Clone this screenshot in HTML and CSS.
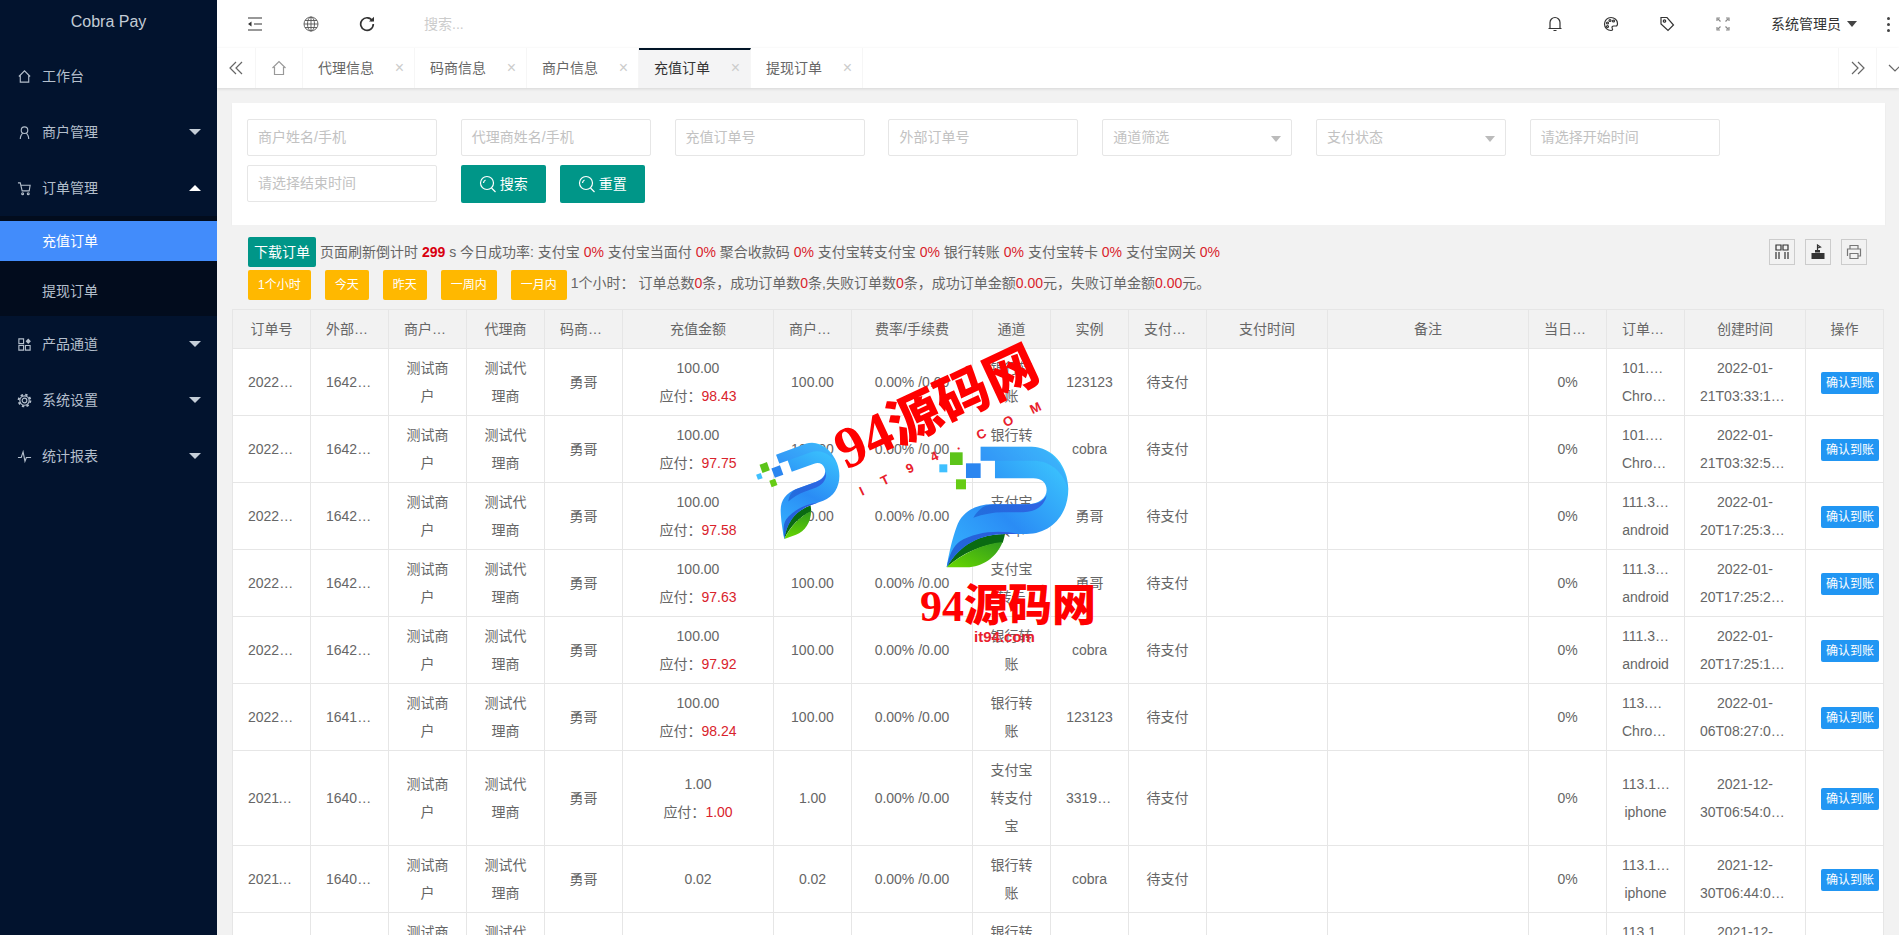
FILE: index.html
```html
<!DOCTYPE html>
<html lang="zh-CN">
<head>
<meta charset="utf-8">
<title>Cobra Pay</title>
<link rel="stylesheet" href="styles.css">
</head>
<body>
<div class="app">
  <aside class="side">
    <div class="brand">Cobra Pay</div>
    <nav>
      <a class="m"><svg class="ic si" viewBox="0 0 16 16"><path d="M2 8 8 2l6 6M3.500 7v7h9V7"/></svg>工作台</a>
      <a class="m"><svg class="ic si" viewBox="0 0 16 16"><circle cx="8" cy="5.500" r="3.500"/><path d="M3.500 15c0-3 1.500-6 3-6M12.500 15c0-3-1.500-6-3-6"/></svg>商户管理<i class="car"></i></a>
      <a class="m lit"><svg class="ic si" viewBox="0 0 16 16"><path d="M1 2h2.500l2 8.500h7.500l1-6H4"/><circle cx="6" cy="13.500" r="1"/><circle cx="12" cy="13.500" r="1"/></svg>订单管理<i class="car up"></i></a>
      <div class="sub">
        <a class="si-a on">充值订单</a>
        <a class="si-a">提现订单</a>
      </div>
      <a class="m"><svg class="ic si" viewBox="0 0 16 16"><path d="M2 2h5v5H2zM2 9h5v5H2zM9 9h5v5H9z"/><path class="fill" d="m12 1.500 2.800 3-2.800 3-2.800-3z"/></svg>产品通道<i class="car"></i></a>
      <a class="m"><svg class="ic si" viewBox="0 0 16 16"><circle cx="8" cy="8" r="2.500"/><circle cx="8" cy="8" r="5"/><circle class="teeth" cx="8" cy="8" r="6.300"/></svg>系统设置<i class="car"></i></a>
      <a class="m"><svg class="ic si" viewBox="0 0 16 16"><path d="M1 9h3.500l2-6 2 10 1.500-4h5"/></svg>统计报表<i class="car"></i></a>
    </nav>
  </aside>

  <div class="main">
    <header class="top">
      <div class="top-l">
        <svg class="ic ti" viewBox="0 0 16 16"><path d="M1 2h14M7 8h8M1 14h14"/><path class="fill" d="M1 8l3.500-2.500v5z"/></svg>
        <svg class="ic ti globe" viewBox="0 0 16 16"><circle cx="8" cy="8" r="7"/><ellipse cx="8" cy="8" rx="3.500" ry="7"/><path d="M1 8h14M2 4.500h12M2 11.500h12M8 1v14"/></svg>
        <svg class="ic ti re" viewBox="0 0 16 16"><path d="M13.500 5A6.300 6.300 0 1 0 14.300 8"/><path class="fill" d="M10 5.500h5V.8z"/></svg>
        <span class="find">搜索...</span>
      </div>
      <div class="top-r">
        <svg class="ic ti" viewBox="0 0 16 16"><path d="M3 12.500V6.500a5 5 0 0 1 10 0v6M1.500 12.500h13M6.500 14.500h3"/></svg>
        <svg class="ic ti" viewBox="0 0 16 16"><path d="M8 1.500a6.500 6.500 0 0 0 0 13c1.800 0 1.800-1.200 1.200-2.200-.6-1.200.2-2.300 1.500-2.300h2.300c1 0 1.500-.8 1.500-2.500C14.500 4 11.500 1.500 8 1.500z"/><circle cx="4.500" cy="7" r="1"/><circle cx="7" cy="4.500" r="1"/><circle cx="10.500" cy="5" r="1"/><circle cx="4.500" cy="10.500" r="1"/></svg>
        <svg class="ic ti" viewBox="0 0 16 16"><path d="M2 1.500h6l6.500 7.500-5.500 5.500L2 8z"/><circle cx="5.500" cy="5" r="1.200"/></svg>
        <svg class="ic ti dim" viewBox="0 0 16 16"><path d="M2 5V2h3M11 2h3v3M14 11v3h-3M5 14H2v-3M3 3l2.500 2.500M13 3l-2.500 2.500M13 13l-2.500-2.500M3 13l2.500-2.500"/></svg>
        <span class="user">系统管理员<i class="tri"></i></span>
        <span class="dots"><i></i><i></i><i></i></span>
      </div>
    </header>

    <div class="tabs">
      <span class="ctl"><svg class="ic chev" viewBox="0 0 16 16"><path d="M8 2 2 8l6 6M14 2 8 8l6 6"/></svg></span>
      <span class="home"><svg class="ic hm" viewBox="0 0 16 16"><path d="M1.500 8 8 1.500 14.500 8M3.500 7v7.500h9V7"/></svg></span>
      <span class="tab">代理信息<b>×</b></span>
      <span class="tab">码商信息<b>×</b></span>
      <span class="tab">商户信息<b>×</b></span>
      <span class="tab act">充值订单<b>×</b></span>
      <span class="tab">提现订单<b>×</b></span>
      <span class="grow"></span>
      <span class="ctl"><svg class="ic chev" viewBox="0 0 16 16"><path d="M2 2l6 6-6 6M8 2l6 6-6 6"/></svg></span>
      <span class="more"><svg class="ic chev" viewBox="0 0 16 16"><path d="M2 5l6 6 6-6"/></svg></span>
    </div>

    <div class="page">
      <form class="card">
        <span class="inp">商户姓名/手机</span>
        <span class="inp">代理商姓名/手机</span>
        <span class="inp">充值订单号</span>
        <span class="inp">外部订单号</span>
        <span class="inp sel">通道筛选<i class="tri lt"></i></span>
        <span class="inp sel">支付状态<i class="tri lt"></i></span>
        <span class="inp">请选择开始时间</span>
        <span class="inp">请选择结束时间</span>
        <div class="acts">
          <span class="btn"><svg class="ic mag" viewBox="0 0 18 18"><circle cx="8" cy="8" r="6.500"/><path d="m12.500 13 4 4M4.500 8a3.500 3.500 0 0 1 2-3"/></svg>搜索</span>
          <span class="btn"><svg class="ic mag" viewBox="0 0 18 18"><circle cx="8" cy="8" r="6.500"/><path d="m12.500 13 4 4M4.500 8a3.500 3.500 0 0 1 2-3"/></svg>重置</span>
        </div>
      </form>

      <div class="bar">
        <div class="bar-l">
          <div class="line one"><span class="dl">下载订单</span><span class="info">页面刷新倒计时 <strong>299</strong> s 今日成功率: 支付宝 <em>0%</em> 支付宝当面付 <em>0%</em> 聚合收款码 <em>0%</em> 支付宝转支付宝 <em>0%</em> 银行转账 <em>0%</em> 支付宝转卡 <em>0%</em> 支付宝网关 <em>0%</em></span></div>
          <div class="line"><span class="yl">1个小时</span><span class="yl">今天</span><span class="yl">昨天</span><span class="yl">一周内</span><span class="yl">一月内</span><span class="sum">1个小时： 订单总数<em>0</em>条，成功订单数<em>0</em>条,失败订单数<em>0</em>条，成功订单金额<em>0.00</em>元，失败订单金额<em>0.00</em>元。</span></div>
        </div>
        <div class="tools">
          <span class="tool"><svg class="ic tk" viewBox="0 0 16 16"><path d="M2 1h5v5H2zM9 1h5v5H9zM2 8v7M5 8v7M11 8v7M14 8v7"/></svg></span>
          <span class="tool"><svg class="ic tk" viewBox="0 0 16 16"><path class="fill" d="M1.500 9h13v6h-13zM5 6h5v2.500H5z"/><path d="M7.500 6V1l3 2-3 1"/></svg></span>
          <span class="tool"><svg class="ic tk gr" viewBox="0 0 16 16"><path d="M4 5V1.500h8V5M1.500 12V5h13v7H12M4 9.500h8v5H4z"/></svg></span>
        </div>
      </div>

      <table class="grid">
        <colgroup>
          <col class="w78"><col class="w78"><col class="w78"><col class="w78"><col class="w78"><col class="w151"><col class="w78"><col class="w121"><col class="w78"><col class="w78"><col class="w78"><col class="w121"><col class="w202"><col class="w78"><col class="w78"><col class="w121"><col class="w78">
        </colgroup>
        <thead>
          <tr><th><div>订单号</div></th><th><div>外部订单号</div></th><th><div>商户名称</div></th><th><div>代理商</div></th><th><div>码商名称</div></th><th><div>充值金额</div></th><th><div>商户实收</div></th><th><div>费率/手续费</div></th><th><div>通道</div></th><th><div>实例</div></th><th><div>支付状态</div></th><th><div>支付时间</div></th><th><div>备注</div></th><th><div>当日成功率</div></th><th><div>订单信息</div></th><th><div>创建时间</div></th><th><div>操作</div></th></tr>
        </thead>
        <tbody>
          <tr><td><div class="one-l">2022012103331</div></td><td><div class="one-l">1642735996</div></td><td><div>测试商户</div></td><td><div>测试代理商</div></td><td><div>勇哥</div></td><td><div>100.00<br>应付：<em>98.43</em></div></td><td><div>100.00</div></td><td><div>0.00% /0.00</div></td><td><div>银行转账</div></td><td><div>123123</div></td><td><div>待支付</div></td><td></td><td></td><td><div>0%</div></td><td><div class="one-l">101.32.128.10</div><div class="one-l">Chrome</div></td><td><div>2022-01-21T03:33:16.000Z</div></td><td><div class="op"><span class="ok">确认到账</span></div></td></tr>
          <tr><td><div class="one-l">2022012103325</div></td><td><div class="one-l">1642735970</div></td><td><div>测试商户</div></td><td><div>测试代理商</div></td><td><div>勇哥</div></td><td><div>100.00<br>应付：<em>97.75</em></div></td><td><div>100.00</div></td><td><div>0.00% /0.00</div></td><td><div>银行转账</div></td><td><div>cobra</div></td><td><div>待支付</div></td><td></td><td></td><td><div>0%</div></td><td><div class="one-l">101.32.128.10</div><div class="one-l">Chrome</div></td><td><div>2022-01-21T03:32:55.000Z</div></td><td><div class="op"><span class="ok">确认到账</span></div></td></tr>
          <tr><td><div class="one-l">2022012017253</div></td><td><div class="one-l">1642699530</div></td><td><div>测试商户</div></td><td><div>测试代理商</div></td><td><div>勇哥</div></td><td><div>100.00<br>应付：<em>97.58</em></div></td><td><div>100.00</div></td><td><div>0.00% /0.00</div></td><td><div>支付宝转卡</div></td><td><div>勇哥</div></td><td><div>待支付</div></td><td></td><td></td><td><div>0%</div></td><td><div class="one-l">111.39.24.60</div><div class="one-l">android</div></td><td><div>2022-01-20T17:25:36.000Z</div></td><td><div class="op"><span class="ok">确认到账</span></div></td></tr>
          <tr><td><div class="one-l">2022012017252</div></td><td><div class="one-l">1642699520</div></td><td><div>测试商户</div></td><td><div>测试代理商</div></td><td><div>勇哥</div></td><td><div>100.00<br>应付：<em>97.63</em></div></td><td><div>100.00</div></td><td><div>0.00% /0.00</div></td><td><div>支付宝转卡</div></td><td><div>勇哥</div></td><td><div>待支付</div></td><td></td><td></td><td><div>0%</div></td><td><div class="one-l">111.39.24.60</div><div class="one-l">android</div></td><td><div>2022-01-20T17:25:24.000Z</div></td><td><div class="op"><span class="ok">确认到账</span></div></td></tr>
          <tr><td><div class="one-l">2022012017251</div></td><td><div class="one-l">1642699510</div></td><td><div>测试商户</div></td><td><div>测试代理商</div></td><td><div>勇哥</div></td><td><div>100.00<br>应付：<em>97.92</em></div></td><td><div>100.00</div></td><td><div>0.00% /0.00</div></td><td><div>银行转账</div></td><td><div>cobra</div></td><td><div>待支付</div></td><td></td><td></td><td><div>0%</div></td><td><div class="one-l">111.39.24.60</div><div class="one-l">android</div></td><td><div>2022-01-20T17:25:12.000Z</div></td><td><div class="op"><span class="ok">确认到账</span></div></td></tr>
          <tr><td><div class="one-l">2022010608270</div></td><td><div class="one-l">1641457620</div></td><td><div>测试商户</div></td><td><div>测试代理商</div></td><td><div>勇哥</div></td><td><div>100.00<br>应付：<em>98.24</em></div></td><td><div>100.00</div></td><td><div>0.00% /0.00</div></td><td><div>银行转账</div></td><td><div>123123</div></td><td><div>待支付</div></td><td></td><td></td><td><div>0%</div></td><td><div class="one-l">113.13.20.45</div><div class="one-l">Chrome</div></td><td><div>2022-01-06T08:27:05.000Z</div></td><td><div class="op"><span class="ok">确认到账</span></div></td></tr>
          <tr><td><div class="one-l">2021123006540</div></td><td><div class="one-l">1640847240</div></td><td><div>测试商户</div></td><td><div>测试代理商</div></td><td><div>勇哥</div></td><td><div>1.00<br>应付：<em>1.00</em></div></td><td><div>1.00</div></td><td><div>0.00% /0.00</div></td><td><div>支付宝转支付宝</div></td><td><div class="one-l">33191250</div></td><td><div>待支付</div></td><td></td><td></td><td><div>0%</div></td><td><div class="one-l wide">113.13.20.45</div><div class="one-l">iphone</div></td><td><div>2021-12-30T06:54:08.000Z</div></td><td><div class="op"><span class="ok">确认到账</span></div></td></tr>
          <tr><td><div class="one-l">2021123006440</div></td><td><div class="one-l">1640846640</div></td><td><div>测试商户</div></td><td><div>测试代理商</div></td><td><div>勇哥</div></td><td><div>0.02</div></td><td><div>0.02</div></td><td><div>0.00% /0.00</div></td><td><div>银行转账</div></td><td><div>cobra</div></td><td><div>待支付</div></td><td></td><td></td><td><div>0%</div></td><td><div class="one-l wide">113.13.20.45</div><div class="one-l">iphone</div></td><td><div>2021-12-30T06:44:02.000Z</div></td><td><div class="op"><span class="ok">确认到账</span></div></td></tr>
          <tr><td><div class="one-l">2021123006430</div></td><td><div class="one-l">1640846580</div></td><td><div>测试商户</div></td><td><div>测试代理商</div></td><td><div>勇哥</div></td><td><div>0.02</div></td><td><div>0.02</div></td><td><div>0.00% /0.00</div></td><td><div>银行转账</div></td><td><div>cobra</div></td><td><div>待支付</div></td><td></td><td></td><td><div>0%</div></td><td><div class="one-l wide">113.13.20.45</div><div class="one-l">iphone</div></td><td><div>2021-12-30T06:43:02.000Z</div></td><td><div class="op"><span class="ok">确认到账</span></div></td></tr>
        </tbody>
      </table>
    </div>
  </div>
</div>

<svg class="mark" viewBox="0 0 1899 935" aria-hidden="true">
  <defs>
    <linearGradient id="gb" x1="1" y1="0" x2="0" y2="1"><stop offset="0" stop-color="#3fd0ff"/><stop offset=".55" stop-color="#2a8cf5"/><stop offset="1" stop-color="#36b6ff"/></linearGradient>
    <linearGradient id="gd" x1="1" y1="0" x2="0" y2="0"><stop offset="0" stop-color="#2f58e0"/><stop offset="1" stop-color="#2068d8"/></linearGradient>
    <linearGradient id="gl" x1="0" y1="1" x2="1" y2="0"><stop offset="0" stop-color="#68d800"/><stop offset="1" stop-color="#2f9a1e"/></linearGradient>
    <g id="logo">
      <path fill="#0a6b12" d="M620 682c28-60 80-98 175-100-2 10-4 18-7 26-60 5-120 30-168 74z"/>
      <path fill="url(#gl)" d="M620 682c50-44 108-70 168-76-18 46-62 76-108 76z"/>
      <path fill="url(#gb)" d="M722 320H875c62 0 110 58 110 128 0 76-52 134-125 134H795c-75 0-135 32-175 100 6-40 18-90 30-122 16-44 54-67 108-67H860c35 0 60-18 60-43 0-22-16-35-40-35H765v-53H722z"/>
      <path fill="url(#gd)" d="M620 682c40-68 100-100 175-100h40c-60-14-130-6-175 22-20 14-32 40-40 78z"/>
      <path fill="url(#gd)" d="M860 493c30 0 50-8 60-28-4 26-26 50-70 52H790c-30 0-60 6-90 16 14-24 34-40 60-40z" opacity=".85"/>
      <path fill="#3c7ff2" d="M765 362h115c50 0 88 30 105 86-4-62-50-128-110-128H722v42z" opacity=".25"/>
      <rect x="630" y="337" width="38" height="38" fill="#5cc41a"/>
      <rect x="678" y="370" width="44" height="44" fill="#2b86f0"/>
      <rect x="598" y="373" width="24" height="24" fill="#3fc0ff"/>
      <rect x="648" y="418" width="30" height="30" fill="#66cc14"/>
    </g>
  </defs>
  <g transform="translate(740 340) scale(.3333)">
    <use href="#logo" transform="translate(133 597) rotate(-20) scale(.62 .68) translate(-620 -682)"/>
    <use href="#logo"/>
  </g>
  <text class="wm-a" transform="translate(846 470) rotate(-25)"><tspan class="wm-n">94</tspan>源码网</text>
  <text class="wm-s" transform="translate(862 496) rotate(-25.600)">IT94.COM</text>
  <text class="wm-b" x="920" y="621">94源码网</text>
  <text class="wm-c" x="974" y="642">it94.com</text>
</svg>
</body>
</html>
```

FILE: styles.css
```css
* { box-sizing: border-box; }
html, body { margin: 0; height: 100%; overflow: hidden; }
body { font: 14px/24px "Liberation Sans", "Noto Sans CJK SC", sans-serif; color: #666; background: #f2f2f2; }
em { font-style: normal; color: #d9232c; }
i, b { font-style: normal; }

.app { display: flex; height: 100vh; }

.ic { fill: none; stroke: currentColor; stroke-width: 1.2; display: block; }
.ic .fill { fill: currentColor; stroke: none; }
.ic .teeth { stroke-width: 2; stroke-dasharray: 2.500 2.450; }

/* sidebar */
.side { width: 217px; flex: none; background: #02132e; color: #b4bfcc; }
.brand { height: 48px; line-height: 44px; text-align: center; font-size: 16px; color: #c3ccd6; }
.m { display: flex; align-items: center; height: 56px; padding-left: 17px; position: relative; }
.si { width: 15px; height: 15px; margin-right: 10px; }
.car { position: absolute; left: 189px; top: 25px; border: 6.500px solid transparent; border-top: 6px solid #c5ced8; border-bottom: 0; }
.car.up { border-top: 0; border-bottom: 6px solid #fff; }
.sub { background: #020c1d; height: 100px; display: flex; flex-direction: column; gap: 10px; padding-top: 5px; }
.si-a { display: block; height: 40px; line-height: 40px; padding-left: 42px; }
.si-a.on { background: #428cfb; color: #fff; }

/* header */
.main { flex: 1; min-width: 0; display: flex; flex-direction: column; }
.top { height: 48px; flex: none; display: flex; justify-content: space-between; background: #fff; color: #333; }
.top-l { display: flex; align-items: center; padding-left: 30px; gap: 40px; }
.top-r { display: flex; align-items: center; gap: 40px; }
.ti { width: 16px; height: 16px; flex: none; }
.re { stroke-width: 1.700; }
.globe { color: #555; stroke-width: .9; }
.dim { color: #888; }
.find { color: #ccc; margin-left: 9px; }
.user { color: #333; display: flex; align-items: center; }
.tri { margin-left: 6px; border: 5.500px solid transparent; border-top: 6px solid #444; border-bottom: 0; }
.tri.lt { border-top-color: #bbb; margin-left: 0; position: absolute; right: 10px; top: 16px; }
.dots { display: flex; flex-direction: column; gap: 3px; margin-left: -10px; margin-right: 9px; }
.dots i { width: 3px; height: 3px; background: #444; border-radius: 50%; }

/* tabs */
.tabs { height: 40px; flex: none; display: flex; background: #fff; box-shadow: 0 1px 3px rgba(0,0,0,.12); position: relative; color: #666; overflow: hidden; }
.ctl { width: 39px; display: flex; align-items: center; justify-content: center; border-right: 1px solid #f6f6f6; color: #666; }
.ctl:nth-last-child(2) { border-left: 1px solid #f6f6f6; }
.chev { width: 16px; height: 16px; flex: none; }
.home { width: 47px; display: flex; align-items: center; justify-content: center; border-right: 1px solid #f6f6f6; color: #999; }
.hm { width: 16px; height: 16px; }
.tab { width: 112px; padding-left: 15px; line-height: 40px; border-right: 1px solid #f6f6f6; position: relative; }
.tab b { position: absolute; right: 10px; top: 0; font-weight: 400; font-size: 16px; color: #ccc; }
.tab.act { background: #f4f4f5; color: #333; border-top: 2px solid #011427; line-height: 36px; }
.tab.act b { line-height: 36px; }
.grow { flex: 1; }
.more { width: 22px; display: flex; align-items: center; padding-left: 10px; flex: none; overflow: hidden; }

/* page */
.page { flex: 1; min-height: 0; padding: 15px 14px 0 15px; overflow: hidden; }
.card { display: grid; grid-template-columns: repeat(7, 190px); gap: 9px 23.800px; padding: 16px 15px 0; background: #fff; box-shadow: 0 1px 2px rgba(0,0,0,.05); height: 122px; align-content: start; }
.inp { height: 37px; border: 1px solid #e6e6e6; border-radius: 2px; line-height: 35px; padding-left: 10px; color: #c2c2c2; position: relative; }
.acts { display: flex; gap: 14px; grid-column: span 2; }
.btn { display: flex; align-items: center; justify-content: center; gap: 3px; width: 85px; height: 38px; background: #009688; color: #fff; border-radius: 2px; }
.mag { width: 18px; height: 18px; }

/* toolbar */
.bar { height: 84px; display: flex; justify-content: space-between; padding: 12px 18px 0 16px; background: #f2f2f2; }
.line { display: flex; align-items: center; height: 32px; }
.line.one { height: 30px; margin-bottom: 2px; }
.dl { width: 68px; height: 30px; line-height: 30px; text-align: center; background: #009688; color: #fff; border-radius: 2px; margin-right: 4px; }
.yl { height: 30px; line-height: 30px; padding: 0 10px; font-size: 12px; background: #ffb800; color: #fff; border-radius: 2px; margin-right: 14px; }
.yl:nth-child(5) { margin-right: 4px; }
.sum { margin-top: -4px; }
.info strong { color: #d9000f; }
.tools { display: flex; gap: 10px; padding-top: 2px; }
.tool { width: 26px; height: 26px; border: 1px solid #ccc; display: flex; align-items: center; justify-content: center; color: #333; }
.tk { width: 16px; height: 16px; }
.gr { color: #777; }

/* table */
.grid { table-layout: fixed; width: 1652px; border-collapse: collapse; background: #fff; line-height: 28px; }
.grid col.w78 { width: 78px; }
.grid col.w121 { width: 121px; }
.grid col.w151 { width: 151px; }
.grid col.w202 { width: 201px; }
.grid th, .grid td { border: 1px solid #e6e6e6; padding: 5px 0; text-align: center; font-weight: 400; }
.grid th { background: #f2f2f2; }
.grid th div { padding: 0 15px; white-space: nowrap; overflow: hidden; text-overflow: ellipsis; }
.grid td div { padding: 0 15px; overflow: hidden; text-overflow: ellipsis; }
.grid td .one-l { white-space: nowrap; }
.grid td .wide { padding-right: 13px; }
.grid td .op { overflow: hidden; padding-right: 0; white-space: nowrap; text-align: left; }
.ok { display: inline-block; height: 22px; line-height: 22px; padding: 0 5px; font-size: 12px; background: #2196f3; color: #fff; border-radius: 2px; vertical-align: middle; }

/* watermark */
.mark { position: absolute; left: 0; top: 0; width: 1899px; height: 935px; pointer-events: none; }
.mark text { fill: #f00; font-family: "Liberation Serif", "Noto Sans CJK SC", serif; font-weight: 900; }
.wm-a { font-size: 53px; }
.wm-n { font-size: 58px; }
.wm-b { font-size: 44px; }
.mark .wm-s { font-family: "Liberation Sans", sans-serif; font-size: 13px; font-weight: 700; letter-spacing: 20px; fill: #e8202c; }
.mark .wm-c { font-family: "Liberation Sans", sans-serif; font-size: 15px; font-weight: 700; fill: #e8202c; }
```
